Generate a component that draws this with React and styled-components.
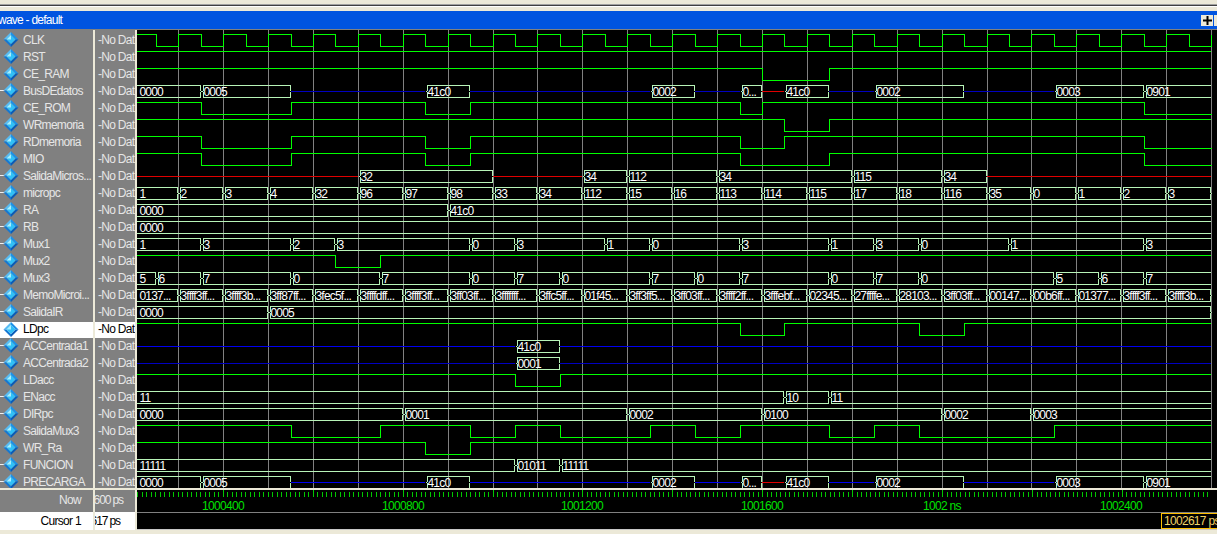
import React from 'react';
import styled, { createGlobalStyle } from 'styled-components';

const GlobalStyle = createGlobalStyle`
  html, body {
    margin: 0;
    padding: 0;
    background: #ece9d8;
    overflow: hidden;
  }
`;

const Page = styled.div`
  width: 1217px;
  height: 534px;
  display: flex;
  flex-direction: column;
  overflow: hidden;
  font-family: "Liberation Sans", Arial, sans-serif;
  font-size: 12px;
  letter-spacing: -0.7px;
`;

const TopChrome = styled.div`
  height: 11px;
  flex: none;
  box-sizing: border-box;
  background: linear-gradient(#ece9d8 0 4px, #a0a0a0 4px 5px, #404040 5px 6px, #ffffff 6px 7px, #ece9d8 7px);
`;

const TitleBar = styled.div`
  height: 19px;
  flex: none;
  box-sizing: border-box;
  background: #0054e0;
  border-bottom: 1px solid #808080;
  display: flex;
  align-items: center;
  color: #fff;
`;

const TitleText = styled.span`
  flex: 1;
  margin-left: -2px;
  letter-spacing: -0.75px;
`;

const TitleButton = styled.span`
  width: 12px;
  height: 11px;
  margin-right: 1px;
  background: #ece9d8;
  display: flex;
  align-items: center;
  justify-content: center;
  flex: none;
  &:last-child {
    margin-right: 0;
    width: 3px;
  }
`;

const Body = styled.div`
  height: 458px;
  flex: none;
  display: flex;
  overflow: hidden;
`;

const Pane = styled.div`
  box-sizing: border-box;
  width: ${(p) => p.$width}px;
  flex: none;
  padding-top: 2px;
  background: #808080;
  border-right: 2px solid #ece9d8;
  overflow: hidden;
`;

const Row = styled.div`
  height: 17px;
  box-sizing: border-box;
  display: flex;
  align-items: center;
  white-space: nowrap;
  overflow: hidden;
  padding-bottom: 2px;
  background: ${(p) => (p.$selected ? '#fff' : 'transparent')};
  color: ${(p) => (p.$selected ? '#000' : '#e6e6e6')};
  border-top: ${(p) => (p.$selected ? '1px solid #808080' : 'none')};
  padding-left: ${(p) => p.$inset}px;
`;

const SignalName = styled.span`
  margin-left: 4px;
`;

const WavePane = styled.div`
  flex: 1;
  background: #000;
  overflow: hidden;
  svg {
    display: block;
  }
`;

const Footer = styled.div`
  flex: 1;
  display: flex;
  box-sizing: border-box;
  border-top: 2px solid #ece9d8;
  border-bottom: 4px solid #ece9d8;
`;

const FooterPane = styled.div`
  box-sizing: border-box;
  width: ${(p) => p.$width}px;
  flex: none;
  border-right: 2px solid #ece9d8;
  background: #808080;
  display: flex;
  flex-direction: column;
  overflow: hidden;
`;

const NowCell = styled.div`
  height: 21px;
  flex: none;
  box-sizing: border-box;
  padding-bottom: 1px;
  display: flex;
  align-items: center;
  justify-content: flex-end;
  white-space: nowrap;
  color: #e6e6e6;
  padding-right: ${(p) => p.$pad}px;
  letter-spacing: ${(p) => p.$tight || -0.7}px;
`;

const CursorCell = styled(NowCell)`
  height: 18px;
  margin-top: 1px;
  background: #fff;
  color: #000;
`;

const RulerPane = styled.div`
  flex: 1;
  position: relative;
  background: #000;
  overflow: hidden;
  border-bottom: 1px solid #c8c8c8;
  svg {
    display: block;
  }
`;

const CursorTag = styled.div`
  position: absolute;
  left: 1024px;
  top: 23px;
  height: 14px;
  line-height: 14px;
  padding: 0 2px;
  border: 1px solid #ffc000;
  color: #f0d468;
  white-space: nowrap;
`;

const RISE = [178, 223, 268, 313, 358, 403, 448, 493, 537, 582, 627, 672, 717, 762, 807, 852, 897, 942, 987, 1031, 1076, 1121, 1166, 1211];
const FALL = [156, 201, 246, 291, 335, 380, 425, 470, 515, 560, 605, 650, 695, 740, 784, 829, 874, 919, 964, 1009, 1054, 1099, 1144, 1189];

const busData = [
  [137, '0000'], [201, '0005'], [291, 'z'], [425, '41c0'], [470, 'z'], [650, '0002'], [695, 'z'], [740, '0...'],
  [762, 'x'], [784, '41c0'], [829, 'z'], [874, '0002'], [964, 'z'], [1054, '0003'], [1144, '0901'],
];
const micropc = ['1', '2', '3', '4', '32', '96', '97', '98', '33', '34', '112', '15', '16', '113', '114', '115', '17', '18', '116', '35', '0', '1', '2', '3'];
const memo = ['0137...', '3ffff3ff...', '3ffff3b...', '3ff87ff...', '3fec5f...', '3ffffdff...', '3ffff3ff...', '3ff03ff...', '3fffffff...', '3ffc5ff...', '01f45...', '3ff3ff5...', '3ff03ff...', '3ffff2ff...', '3fffebf...', '02345...', '27ffffe...', '28103...', '3ff03ff...', '00147...', '00b6ff...', '01377...', '3ffff3ff...', '3ffff3b...'];
const onGrid = (labels) => labels.map((label, i) => [i === 0 ? 137 : RISE[i - 1], label]);

const signals = [
  { name: 'CLK', clock: true },
  { name: 'RST', lows: [] },
  { name: 'CE_RAM', lows: [[762, 829]] },
  { name: 'BusDEdatos', bus: busData, z: '#0000c0' },
  { name: 'CE_ROM', lows: [[201, 291], [425, 470], [740, 762], [1144, 1211]] },
  { name: 'WRmemoria', lows: [[784, 829]] },
  { name: 'RDmemoria', lows: [[201, 291], [425, 470], [740, 784], [1144, 1211]] },
  { name: 'MIO', lows: [[201, 291], [425, 470], [740, 829], [1144, 1211]] },
  { name: 'SalidaMicros...', bus: [[137, 'x'], [358, '32'], [493, 'x'], [582, '34'], [627, '112'], [717, '34'], [852, '115'], [942, '34'], [987, 'x']] },
  { name: 'micropc', bus: onGrid(micropc), closed: true },
  { name: 'RA', bus: [[137, '0000'], [448, '41c0']] },
  { name: 'RB', bus: [[137, '0000']] },
  { name: 'Mux1', bus: [[137, '1'], [201, '3'], [291, '2'], [335, '3'], [470, '0'], [515, '3'], [605, '1'], [650, '0'], [740, '3'], [829, '1'], [874, '3'], [919, '0'], [1009, '1'], [1144, '3']] },
  { name: 'Mux2', lows: [[335, 380]] },
  { name: 'Mux3', bus: [[137, '5'], [156, '6'], [201, '7'], [291, '0'], [380, '7'], [470, '0'], [515, '7'], [560, '0'], [650, '7'], [695, '0'], [740, '7'], [829, '0'], [874, '7'], [919, '0'], [1054, '5'], [1099, '6'], [1144, '7']] },
  { name: 'MemoMicroi...', bus: onGrid(memo), closed: true },
  { name: 'SalidaIR', bus: [[137, '0000'], [268, '0005']], closed: true },
  { name: 'LDpc', lows: [[740, 784], [919, 964]], selected: true },
  { name: 'ACCentrada1', bus: [[137, 'z'], [515, '41c0'], [560, 'z']] },
  { name: 'ACCentrada2', bus: [[137, 'z'], [515, '0001'], [560, 'z']], z: '#0000c0' },
  { name: 'LDacc', lows: [[515, 560]] },
  { name: 'ENacc', bus: [[137, '11'], [784, '10'], [829, '11']] },
  { name: 'DIRpc', bus: [[137, '0000'], [403, '0001'], [627, '0002'], [762, '0100'], [942, '0002'], [1031, '0003']] },
  { name: 'SalidaMux3', lows: [[291, 380], [470, 515], [560, 650], [695, 740], [829, 874], [919, 1054]] },
  { name: 'WR_Ra', lows: [[425, 470]] },
  { name: 'FUNCION', bus: [[137, '11111'], [515, '01011'], [560, '11111']] },
  { name: 'PRECARGA', bus: busData },
];

const END = 1211;
const BIT = '#00ff00';
const BUS = '#b8f4b8';

const rowTop = (i) => 34 + 17 * i;

function bitPath(i, lows) {
  const hi = rowTop(i) + 0.5;
  const lo = hi + 12;
  let d = `M137 ${hi}`;
  lows.forEach(([a, b]) => {
    d += ` H${a + 0.5} V${lo} H${b + 0.5}`;
    if (b < END) d += ` V${hi}`;
  });
  if (!lows.length || lows[lows.length - 1][1] < END) d += ` H${END}`;
  return d;
}

function clockPath() {
  const hi = rowTop(0) + 0.5;
  const lo = hi + 12;
  let d = `M137 ${hi}`;
  FALL.forEach((f, n) => {
    d += ` H${f + 0.5} V${lo} H${RISE[n] + 0.5} V${hi}`;
  });
  return d;
}

function BusSegment({ i, x1, x2, label, first, open }) {
  const top = rowTop(i) + 0.5;
  const bot = top + 12;
  const mid = top + 6;
  const left = first ? '' : `M${x1 + 3} ${top} L${x1 + 2.5} ${top + 1} V${mid - 1} L${x1 + 1.5} ${mid} L${x1 + 2.5} ${mid + 1} V${bot - 1} L${x1 + 3} ${bot}`;
  const right = open ? '' : `M${x2 - 1} ${top} L${x2 - 0.5} ${top + 1} V${mid - 1} L${x2 + 0.5} ${mid} L${x2 - 0.5} ${mid + 1} V${bot - 1} L${x2 - 1} ${bot}`;
  const from = first ? 137 : x1 + 3;
  const to = open ? x2 : x2 - 1;
  return (
    <g>
      <path d={`${left} ${right} M${from} ${top} H${to} M${from} ${bot} H${to}`} fill="none" stroke={BUS} />
      <text x={first ? 139.5 : x1 + 2.5} y={bot - 2} fill="#fff" fontSize="12" letterSpacing="-0.8" fontFamily='"Liberation Sans", Arial, sans-serif'>{label}</text>
    </g>
  );
}

function BusWave({ i, segs, z, closed }) {
  return segs.map(([x1, label], n) => {
    const last = n === segs.length - 1;
    const x2 = last ? END : segs[n + 1][0];
    if (label === 'z' || label === 'x') {
      const y = rowTop(i) + 6.5;
      return <path key={x1} d={`M${x1} ${y} H${x2}`} stroke={label === 'z' ? z || '#0000f0' : '#e00000'} fill="none" />;
    }
    return <BusSegment key={x1} i={i} x1={x1} x2={x2} label={label} first={n === 0} open={last && !closed} />;
  });
}

function Diamond({ stub }) {
  return (
    <svg width="19" height="15" viewBox="0 0 19 15" style={{ flex: 'none' }}>
      {stub && <path d="M0 7.5 H5" stroke="#f0f0f0" />}
      <polygon points="11,0 3.5,7.5 6.5,7.5 11,3" fill="#58bcf4" />
      <polygon points="11,0 18.5,7.5 15.5,7.5 11,3" fill="#1c90e8" />
      <polygon points="18.5,7.5 11,15 11,12 15.5,7.5" fill="#0a5cb8" />
      <polygon points="3.5,7.5 11,15 11,12 6.5,7.5" fill="#1478d4" />
      <polygon points="11,3 15.5,7.5 11,12 6.5,7.5" fill="#30c0f8" />
      <polygon points="11,3 6.5,7.5 11,7.5" fill="#a8f0ff" />
    </svg>
  );
}

function Waves() {
  return (
    <svg width="1080" height="458" viewBox="137 30 1080 458" shapeRendering="crispEdges">
      {RISE.map((x) => (
        <path key={x} d={`M${x + 0.5} 30 V488`} stroke="#808080" />
      ))}
      {signals.map((s, i) => {
        if (s.clock) return <path key={s.name} d={clockPath()} fill="none" stroke={BIT} />;
        if (s.bus) return <BusWave key={s.name} i={i} segs={s.bus} z={s.z} closed={s.closed} />;
        return <path key={s.name} d={bitPath(i, s.lows)} fill="none" stroke={BIT} />;
      })}
    </svg>
  );
}

const rulerLabels = [
  [223, '1000400'], [403, '1000800'], [582, '1001200'], [762, '1001600'], [942, '1002 ns'], [1121, '1002400'],
];

function Ruler() {
  const ticks = [];
  for (let k = -19; k < 220; k++) {
    const x = Math.floor(223.3 + k * 4.496);
    const major = ((k % 20) + 20) % 20 === 0;
    ticks.push(<path key={k} d={`M${x + 0.5} ${major ? 490 : 492} V497`} stroke="#00c800" />);
  }
  return (
    <svg width="1080" height="38" viewBox="137 490 1080 38" shapeRendering="crispEdges">
      {ticks}
      {rulerLabels.map(([x, t]) => (
        <text key={t} x={x} y="510" fill="#00e000" fontSize="12" letterSpacing="-0.7" textAnchor="middle" fontFamily='"Liberation Sans", Arial, sans-serif'>{t}</text>
      ))}
      <path d="M137 512.5 H1217" stroke="#808080" />
    </svg>
  );
}

export default function App() {
  return (
    <Page>
      <GlobalStyle />
      <TopChrome />
      <TitleBar>
        <TitleText>wave - default</TitleText>
        <TitleButton>
          <svg width="9" height="9" viewBox="0 0 9 9">
            <path d="M4.5 0 V9 M0 4.5 H9" stroke="#000" strokeWidth="2" />
          </svg>
        </TitleButton>
        <TitleButton />
      </TitleBar>
      <Body>
        <Pane $width={95}>
          {signals.map((s) => (
            <Row key={s.name} $selected={s.selected} $inset={0}>
              <Diamond stub={!!s.bus} />
              <SignalName>{s.name}</SignalName>
            </Row>
          ))}
        </Pane>
        <Pane $width={42}>
          {signals.map((s) => (
            <Row key={s.name} $selected={s.selected} $inset={3}>-No Dat</Row>
          ))}
        </Pane>
        <WavePane>
          <Waves />
        </WavePane>
      </Body>
      <Footer>
        <FooterPane $width={95}>
          <NowCell $pad={12}>Now</NowCell>
          <CursorCell $pad={12}>Cursor 1</CursorCell>
        </FooterPane>
        <FooterPane $width={42}>
          <NowCell $pad={12} $tight={-1.1}>1002600 ps</NowCell>
          <CursorCell $pad={15} $tight={-1.1}>1002617 ps</CursorCell>
        </FooterPane>
        <RulerPane>
          <Ruler />
          <CursorTag>1002617 ps</CursorTag>
        </RulerPane>
      </Footer>
    </Page>
  );
}
